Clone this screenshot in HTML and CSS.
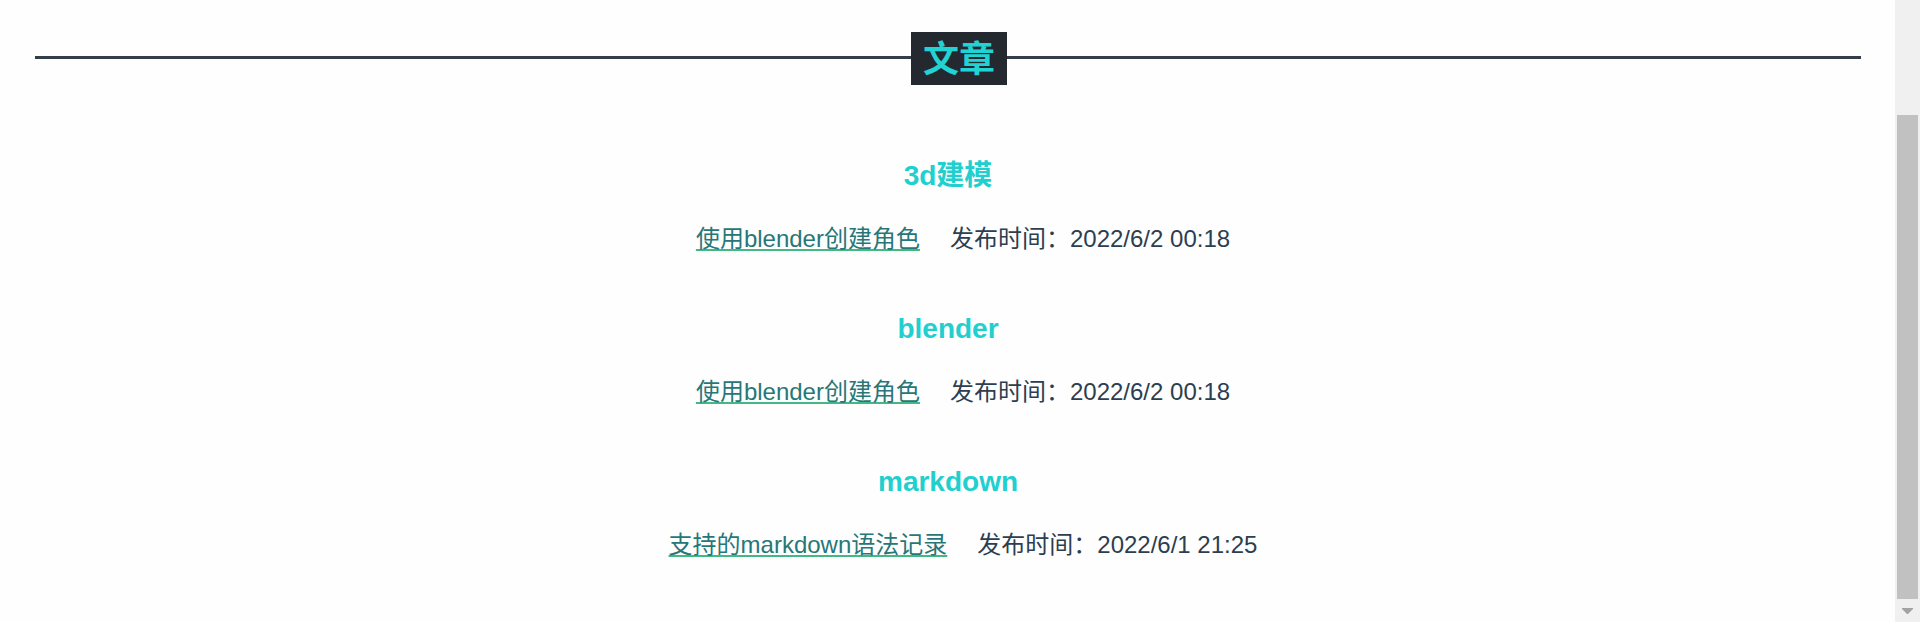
FILE: index.html
```html
<!DOCTYPE html>
<html lang="zh-CN">
<head>
<meta charset="utf-8">
<meta name="viewport" content="width=device-width, initial-scale=1">
<title>文章</title>
<link rel="stylesheet" href="styles.css">
</head>
<body>
<div class="page">
  <main class="content">
    <header class="title-bar">
      <hr class="title-line">
      <h1 class="title">文章</h1>
    </header>
    <section class="group">
      <h2 class="group-name">3d建模</h2>
      <p class="post"><a class="post-link" href="#">使用blender创建角色</a><span class="post-date">发布时间：2022/6/2 00:18</span></p>
    </section>
    <section class="group">
      <h2 class="group-name">blender</h2>
      <p class="post"><a class="post-link" href="#">使用blender创建角色</a><span class="post-date">发布时间：2022/6/2 00:18</span></p>
    </section>
    <section class="group">
      <h2 class="group-name">markdown</h2>
      <p class="post"><a class="post-link" href="#">支持的markdown语法记录</a><span class="post-date">发布时间：2022/6/1 21:25</span></p>
    </section>
  </main>
  <div class="scrollbar" aria-hidden="true">
    <div class="scroll-thumb"></div>
    <svg class="scroll-arrow" width="11" height="6" viewBox="0 0 11 6"><path d="M0 0H11V1L6 6H5L0 1Z" fill="#a3a3a3"/></svg>
  </div>
</div>
</body>
</html>
```
FILE: styles.css
```css
* {
  box-sizing: border-box;
}

body {
  margin: 0;
  background: #fefefe;
  color: #2c3e50;
  font-family: "Liberation Sans", "Noto Sans CJK SC", sans-serif;
  font-size: 24px;
  line-height: 32px;
}

.page {
  display: flex;
  min-height: 100vh;
}

.content {
  flex: 1;
  padding: 32px 34px 0 35px;
}

.title-bar {
  display: grid;
  align-items: center;
  justify-items: center;
  margin-bottom: 73px;
}

.title-line,
.title {
  grid-area: 1 / 1;
}

.title-line {
  width: 100%;
  height: 3px;
  margin: 0 0 2px;
  border: 0;
  background: #363d4a;
}

.title {
  margin: 0 0 0 22px;
  padding: 2px 12px 0;
  background: #24292f;
  color: #21d3d3;
  font-size: 36px;
  line-height: 51px;
}

.group {
  display: flex;
  flex-direction: column;
  align-items: center;
  gap: 29px;
  margin-bottom: 56px;
}

.group-name {
  margin: 0;
  color: #21cfcf;
  font-size: 28px;
  line-height: 36px;
}

.post {
  display: flex;
  margin: 0;
}

.post-link,
.post-date {
  margin-left: 30px;
}

.post-link {
  color: #277777;
  text-decoration: underline 2px #42b983;
  text-decoration-skip-ink: none;
  text-underline-offset: 2px;
}

.post-link:hover {
  color: #42b983;
}

.scrollbar {
  display: flex;
  flex-direction: column;
  align-items: center;
  width: 25px;
  padding: 115px 2px 8px;
  background: #f0f0f0;
}

.scroll-thumb {
  flex: 1;
  width: 100%;
  margin-bottom: 9px;
  background: #c1c1c1;
}
```
